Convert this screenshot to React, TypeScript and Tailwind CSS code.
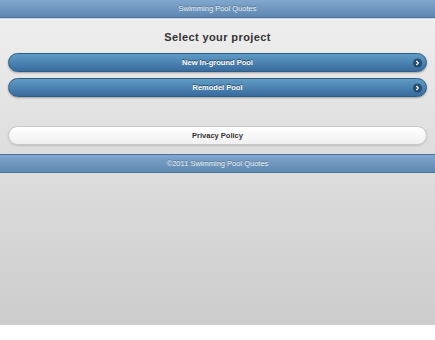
import { ChevronRight } from "lucide-react";

const font = "font-['Liberation_Sans',Arial,sans-serif]";

function ArrowIcon() {
  return (
    <span className="absolute right-[4px] top-1/2 flex size-[9px] -translate-y-1/2 items-center justify-center rounded-full bg-[#1e3d5c]/80">
      <ChevronRight className="size-[7px] text-white" strokeWidth={4} />
    </span>
  );
}

function BlueButton({ label }: { label: string }) {
  return (
    <button
      type="button"
      className="relative flex h-[19px] w-full items-center justify-center rounded-full border border-[#2f5d86] bg-gradient-to-b from-[#5f9cc5] to-[#396b9e] text-[7.5px] font-bold text-white shadow-[0_1px_2px_rgba(0,0,0,0.3)] [text-shadow:0_-1px_0_rgba(0,0,0,0.5)]"
    >
      {label}
      <ArrowIcon />
    </button>
  );
}

export default function App() {
  return (
    <div className={`${font} w-[435px] bg-white`}>
      <header className="flex h-[18px] items-center justify-center border-b border-[#4a729b] bg-gradient-to-b from-[#81a8ce] to-[#5e87b0] text-[7.5px] text-[#eef3f8] [text-shadow:0_-1px_0_rgba(0,0,0,0.3)]">
        Swimming Pool Quotes
      </header>
      <div className="h-[1px] bg-[#c9d7e6]" />

      <main className="bg-gradient-to-b from-[#eeeeee] to-[#dddddd] px-[8px] pb-[9px] pt-[10px]">
        <h1 className="mb-[8px] text-center text-[11px] font-bold leading-[16px] tracking-[0.4px] text-[#333]">
          Select your project
        </h1>
        <div className="flex flex-col gap-[6px]">
          <BlueButton label="New In-ground Pool" />
          <BlueButton label="Remodel Pool" />
        </div>
        <div className="h-[29px]" />
        <button
          type="button"
          className="flex h-[19px] w-full items-center justify-center rounded-full border border-[#c8c8c8] bg-gradient-to-b from-[#ffffff] to-[#f0f0f0] text-[7.5px] font-bold text-[#333] shadow-[0_1px_2px_rgba(0,0,0,0.15)]"
        >
          Privacy Policy
        </button>
      </main>

      <footer className="flex h-[19px] items-center justify-center border-y border-[#4a729b] bg-gradient-to-b from-[#81a8ce] to-[#5e87b0] text-[7.5px] text-[#eef3f8] [text-shadow:0_-1px_0_rgba(0,0,0,0.3)]">
        ©2011 Swimming Pool Quotes
      </footer>

      <div className="h-[152px] bg-gradient-to-b from-[#dddddd] to-[#cccccc]" />
    </div>
  );
}
